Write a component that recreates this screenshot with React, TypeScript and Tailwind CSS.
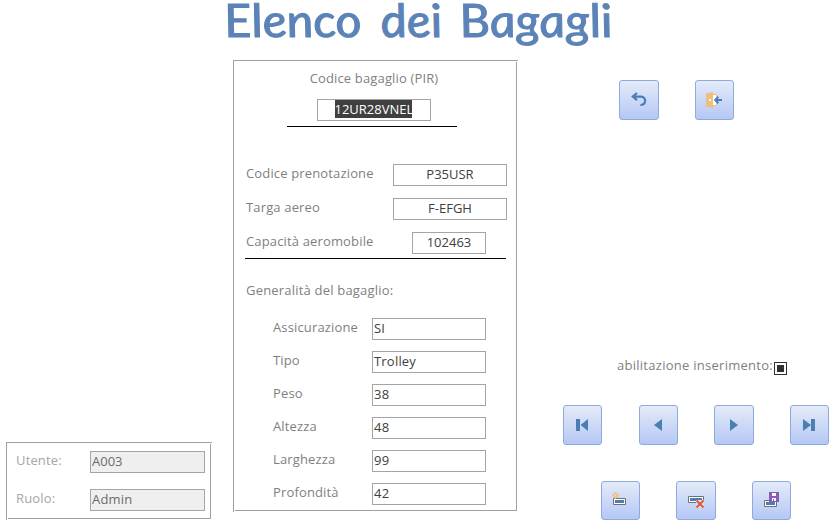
import type { ReactNode } from "react";

const LABEL = "block whitespace-nowrap text-[13px] leading-[22px] tracking-[0.15px]";
const FIELD = "box-border h-[22px] shrink-0 border border-[#a5a5a5] text-[13px] leading-[18px]";

function FrameLines() {
  return (
    <>
      <span className="absolute left-0 top-0 h-full w-px bg-[#a0a0a0]" />
      <span className="absolute left-0 top-0 h-px w-full bg-[#a0a0a0]" />
      <span className="absolute bottom-px left-[2px] right-px h-px bg-[#a0a0a0]" />
      <span className="absolute bottom-px right-px top-[2px] w-px bg-[#a0a0a0]" />
    </>
  );
}

function Btn({ size, label, children }: { size: string; label: string; children: ReactNode }) {
  return (
    <button
      aria-label={label}
      className={`${size} flex shrink-0 items-start rounded-[3px] border border-[#8faadc] bg-linear-to-b from-[#e4ebf8] to-[#b5c7f5] pl-[11px] pt-[11px]`}
    >
      <svg width="16" height="16" viewBox="0 0 16 16" className="block shrink-0 overflow-visible">
        {children}
      </svg>
    </button>
  );
}

const details = [
  ["Assicurazione", "SI"],
  ["Tipo", "Trolley"],
  ["Peso", "38"],
  ["Altezza", "48"],
  ["Larghezza", "99"],
  ["Profondità", "42"],
];

export default function App() {
  return (
    <main className="flex h-[522px] w-[835px] flex-col bg-white font-['Open_Sans','Noto_Sans',sans-serif] text-[#404040]">
      <h1 className="flex h-[60px] shrink-0 pl-[224px] font-['Lato',sans-serif] text-[46px] italic leading-[40px] text-[#5b83b7] [-webkit-text-stroke:1px_#5b83b7]">
        <span className="h-[40px] w-[156px] shrink-0 origin-left skew-x-[8deg] scale-x-[1.09]">Elenco</span>
        <span className="h-[40px] w-[79px] shrink-0 origin-left skew-x-[8deg] scale-x-[1.08]">dei</span>
        <span className="h-[40px] origin-left skew-x-[8deg] scale-x-[1.1]">Bagagli</span>
      </h1>
      <div className="flex h-[462px]">
        <aside className="flex w-[233px] shrink-0 flex-col justify-end pb-[2px] pl-[6px]">
          <div className="relative flex h-[78px] w-[206px] flex-col gap-[16px] pl-[10px] pt-[9px]">
            <FrameLines />
            <div className="flex">
              <span className={`${LABEL} -mt-[2px] w-[74px] text-[#a6a6a6]`}>Utente:</span>
              <span className={`${FIELD} w-[115px] bg-[#efefef] pl-[1px] text-[#6b6b6b]`}>A003</span>
            </div>
            <div className="flex">
              <span className={`${LABEL} -mt-[2px] w-[74px] text-[#a6a6a6]`}>Ruolo:</span>
              <span className={`${FIELD} w-[115px] bg-[#efefef] pl-[1px] tracking-[0.2px] text-[#6b6b6b]`}>Admin</span>
            </div>
          </div>
        </aside>

        <section className="relative h-[452px] w-[285px] shrink-0">
          <FrameLines />
          <div className="flex h-[104px] flex-col items-center pr-[3px] pt-[7px]">
            <span className={`${LABEL} text-[#7f7f7f]`}>Codice bagaglio (PIR)</span>
            <span className={`${FIELD} mt-[10px] flex w-[114px] justify-center pr-[2px]`}>
              <span className="h-[18px] w-[77px] bg-[#404040] text-center leading-[19px] text-white">12UR28VNEL</span>
            </span>
            <span className="ml-[-5px] mt-[5px] h-px w-[170px] shrink-0 bg-black" />
          </div>
          <div className="flex flex-col gap-[12px] pl-[13px] text-[#404040]">
            <div className="flex">
              <span className={`${LABEL} -mt-[2px] w-[147px] text-[#7f7f7f]`}>Codice prenotazione</span>
              <span className={`${FIELD} w-[114px] text-center`}>P35USR</span>
            </div>
            <div className="flex">
              <span className={`${LABEL} -mt-[2px] w-[147px] text-[#7f7f7f]`}>Targa aereo</span>
              <span className={`${FIELD} w-[114px] text-center`}>F-EFGH</span>
            </div>
            <div className="flex">
              <span className={`${LABEL} -mt-[2px] w-[166px] text-[#7f7f7f]`}>Capacità aeromobile</span>
              <span className={`${FIELD} w-[74px] text-center`}>102463</span>
            </div>
          </div>
          <div className="ml-[12px] mt-[4px] h-px w-[261px] bg-black" />
          <span className="ml-[13px] mt-[20px] block text-[13px] leading-[22px] tracking-[0.2px] text-[#7f7f7f]">
            Generalità del bagaglio:
          </span>
          <div className="mt-[17px] flex flex-col gap-[11px] pl-[40px]">
            {details.map(([name, value]) => (
              <div key={name} className="flex">
                <span className={`${LABEL} -mt-[2px] w-[99px] text-[#7f7f7f]`}>{name}</span>
                <span className={`${FIELD} w-[114px] pl-[1px] tracking-[0.2px]`}>{value}</span>
              </div>
            ))}
          </div>
        </section>

        <section className="flex w-[317px] shrink-0 flex-col">
          <div className="flex gap-[36px] pl-[101px] pt-[20px]">
            <Btn size="h-[40px] w-[40px]" label="Annulla">
              <path d="M6 1 1.8 4.6 6 8.2M2 4.6h8c5.6 0 5.6 8.4-.6 8.4" fill="none" stroke="#4a7eb5" strokeWidth="2.2" />
            </Btn>
            <Btn size="h-[40px] w-[39px]" label="Esci">
              <path d="M6 3h3v10H6z" fill="#fff" />
              <path d="M6 2.5h3.5v2M6 13.5h3.5v-2" fill="none" stroke="#ecc07c" />
              <path d="M-1 1.5 6 0v16l-7-1.5z" fill="#ecc07c" />
              <path d="M2 7h2v2H2z" fill="#fff" />
              <path d="M15 8H8M11.3 4.7 8.2 8l3.1 3.3" fill="none" stroke="#4a7eb5" strokeWidth="2" />
            </Btn>
          </div>
          <div className="mt-[234px] flex items-start pl-[99px]">
            <span className="w-[157px] whitespace-nowrap text-[13px] leading-[22px] tracking-[0.27px] text-[#7f7f7f]">
              abilitazione inserimento:
            </span>
            <span className="mt-[8px] flex h-[13px] w-[13px] shrink-0 items-center justify-center border border-[#303030]">
              <span className="h-[7px] w-[7px] bg-[#303030]" />
            </span>
          </div>
          <div className="mt-[29px] flex pl-[45px]">
            <div className="w-[76px] shrink-0">
              <Btn size="h-[40px] w-[39px]" label="Primo">
                <path d="M1 2h4v12H1zM13 2v12L5.5 8z" fill="#4a7eb5" />
              </Btn>
            </div>
            <div className="w-[75px] shrink-0">
              <Btn size="h-[40px] w-[39px]" label="Precedente">
                <path d="M11 2v12L3 8z" fill="#4a7eb5" />
              </Btn>
            </div>
            <div className="w-[76px] shrink-0">
              <Btn size="h-[40px] w-[40px]" label="Successivo">
                <path d="M4 2v12l8-6z" fill="#4a7eb5" />
              </Btn>
            </div>
            <Btn size="h-[40px] w-[39px]" label="Ultimo">
              <path d="M1 2v12l8-6zM9 2h4v12H9z" fill="#4a7eb5" />
            </Btn>
          </div>
          <div className="mt-[36px] flex gap-[36px] pl-[83px]">
            <Btn size="h-[39px] w-[39px]" label="Nuovo">
              <path d="M.5 5.5h12v6H.5z" fill="#fff" stroke="#707070" />
              <path d="M2 7h9v3H2z" fill="#4a7eb5" />
              <path d="M2.5-1v7M-1 2.5h7M0 0l5 5M5 0 0 5" stroke="#e9bd7b" strokeWidth="1.1" />
              <circle cx="2.5" cy="2.5" r="1" fill="#f7ddb0" />
            </Btn>
            <Btn size="h-[39px] w-[40px]" label="Elimina">
              <path d="M.5 3.5h15v6H.5z" fill="#fff" stroke="#707070" />
              <path d="M2 5h12v3H2z" fill="#4a7eb5" />
              <path d="M8 7h8v8H8z" fill="#d5def5" />
              <path d="m8.5 7.5 7 7M15.5 7.5l-7 7" stroke="#dc5a3c" strokeWidth="2" />
            </Btn>
            <Btn size="h-[39px] w-[39px]" label="Salva">
              <path d="M.5 7.5h12v6H.5z" fill="#fff" stroke="#707070" />
              <path d="M2 9h9v3H2z" fill="#4a7eb5" />
              <path d="M5-1h10v10H5z" fill="#8a5ab5" />
              <path d="M8 0h4v3H8zM8 5h4v3H8z" fill="#fff" />
              <path d="M9 6h1v2H9z" fill="#8a5ab5" />
            </Btn>
          </div>
        </section>
      </div>
    </main>
  );
}
